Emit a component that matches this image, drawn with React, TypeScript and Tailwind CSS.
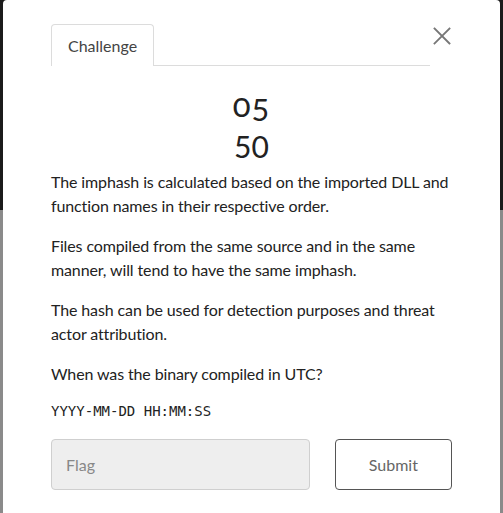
import React, { useState } from 'react';

const lato = { fontFamily: 'Lato, "Open Sans", sans-serif' };

const CloseIcon: React.FC = () => (
    <svg width="18" height="18" viewBox="0 0 18 18" fill="none" stroke="#777" strokeWidth="1.8" strokeLinecap="square">
        <path d="M1.5 1.5 L16.5 16.5 M16.5 1.5 L1.5 16.5" />
    </svg>
);

const App: React.FC = () => {
    const [flag, setFlag] = useState('');

    return (
        <div className="relative w-[503px] h-[513px] overflow-hidden" style={lato}>
            {/* page behind the modal */}
            <div className="flex flex-col h-full">
                <div className="h-[210px] bg-[#1b1b1b]" />
                <div className="flex-1 bg-[#8a8a8a]" />
            </div>

            <div className="absolute top-0 left-[3px] right-[3px] bottom-0 bg-white rounded-t-[4px] px-[48px] pt-[24px]">
                <div className="flex items-end">
                    <div className="flex h-[42px] items-center px-[16px] border border-b-0 border-[#dcdcdc] rounded-t-[4px] text-[16px] text-[#444]">
                        Challenge
                    </div>
                    <div className="w-[276px] border-b border-[#dcdcdc]" />
                    <button className="ml-[3px] mb-[21px] flex items-center justify-center">
                        <CloseIcon />
                    </button>
                </div>

                <div className="flex flex-col items-center mt-[20px] text-[#222]">
                    <div className="text-[33px] leading-[36px] tracking-[1px] [font-variant-numeric:oldstyle-nums]">05</div>
                    <div className="text-[30px] leading-[36px] mt-[6px]">50</div>
                </div>

                <div className="w-[406px] text-[16px] leading-[24px] tracking-[-0.12px] text-[#222]">
                    <p className="mt-[6px]">
                        The imphash is calculated based on the imported DLL and function names in their respective order.
                    </p>
                    <p className="mt-[16px]">
                        Files compiled from the same source and in the same manner, will tend to have the same imphash.
                    </p>
                    <p className="mt-[16px]">
                        The hash can be used for detection purposes and threat actor attribution.
                    </p>
                    <p className="mt-[16px]">When was the binary compiled in UTC?</p>
                    <p
                        className="mt-[15px] text-[14px] leading-[20px] tracking-normal text-[#222]"
                        style={{ fontFamily: '"DejaVu Sans Mono", "Liberation Mono", monospace' }}
                    >
                        YYYY-MM-DD HH:MM:SS
                    </p>
                </div>

                <div className="flex mt-[18px] gap-[25px]">
                    <input
                        value={flag}
                        onChange={(e) => setFlag(e.target.value)}
                        placeholder="Flag"
                        className="w-[260px] h-[51px] px-[14px] bg-[#eeeeee] border border-[#cfcfcf] rounded-[4px] text-[16px] text-[#333] placeholder:text-[#888] outline-none"
                    />
                    <button className="w-[118px] h-[51px] bg-white border border-[#555] rounded-[4px] text-[16px] text-[#666]">
                        Submit
                    </button>
                </div>
            </div>
        </div>
    );
};

export default App;
